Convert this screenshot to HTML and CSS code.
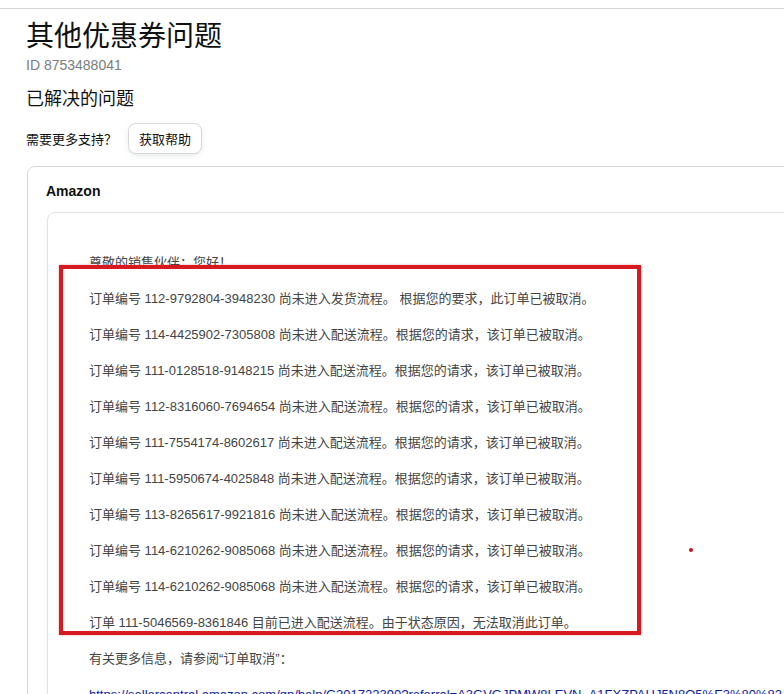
FILE: index.html
```html
<!DOCTYPE html>
<html lang="zh-CN">

<head>
  <meta charset="UTF-8">
  <meta name="viewport" content="width=device-width, initial-scale=1.0">
  <title>其他优惠券问题</title>
  <link rel="stylesheet" href="styles.css">
</head>

<body>

  <div class="topbar"></div>

  <div class="page">
    <h1>其他优惠券问题</h1>
    <div class="case-id">ID 8753488041</div>
    <h2>已解决的问题</h2>

    <div class="support">
      <span>需要更多支持？</span>
      <button class="help-btn">获取帮助</button>
    </div>

    <div class="card">
      <div class="card-title">Amazon</div>

      <div class="message">
        <p>尊敬的销售伙伴：您好！</p>
        <p>订单编号 112-9792804-3948230 尚未进入发货流程。 根据您的要求，此订单已被取消。</p>
        <p>订单编号 114-4425902-7305808 尚未进入配送流程。根据您的请求，该订单已被取消。</p>
        <p>订单编号 111-0128518-9148215 尚未进入配送流程。根据您的请求，该订单已被取消。</p>
        <p>订单编号 112-8316060-7694654 尚未进入配送流程。根据您的请求，该订单已被取消。</p>
        <p>订单编号 111-7554174-8602617 尚未进入配送流程。根据您的请求，该订单已被取消。</p>
        <p>订单编号 111-5950674-4025848 尚未进入配送流程。根据您的请求，该订单已被取消。</p>
        <p>订单编号 113-8265617-9921816 尚未进入配送流程。根据您的请求，该订单已被取消。</p>
        <p>订单编号 114-6210262-9085068 尚未进入配送流程。根据您的请求，该订单已被取消。</p>
        <p>订单编号 114-6210262-9085068 尚未进入配送流程。根据您的请求，该订单已被取消。</p>
        <p>订单 111-5046569-8361846 目前已进入配送流程。由于状态原因，无法取消此订单。</p>
        <p>有关更多信息，请参阅“订单取消”：</p>
        <p><a href="#">https://sellercentral.amazon.com/gp/help/G201722390?referral=A3GVGJPMW8LEVN_A1FXZPAHJ5N8Q5%E3%80%82</a></p>

        <!-- 截图上的红色标注 -->
        <div class="mark-box"></div>
        <div class="mark-dot"></div>
      </div>
    </div>
  </div>

</body>

</html>
```

FILE: styles.css
```css
html,
body {
  margin: 0;
  padding: 0;
  background-color: #fff;
  overflow: hidden;
}

body {
  font-family: "Liberation Sans", "Noto Sans CJK SC", sans-serif;
  color: #111;
}

.topbar {
  height: 8px;
  border-bottom: 1px solid #d6d6d6;
}

.page {
  width: 1100px;
  padding-left: 26px;
}

h1 {
  margin: 10px 0 0;
  font-size: 28px;
  line-height: 36px;
  font-weight: normal;
  color: #0f1111;
}

.case-id {
  margin-top: 1px;
  font-size: 14px;
  line-height: 18px;
  color: #7a7d7d;
}

h2 {
  margin: 13px 0 0;
  font-size: 18px;
  line-height: 24px;
  font-weight: normal;
  color: #0f1111;
}

.support {
  display: flex;
  align-items: center;
  gap: 6px;
  margin-top: 12px;
  font-size: 13px;
  color: #0f1111;
}

.support span {
  width: 96px;
}

.help-btn {
  height: 31px;
  padding: 0 10px;
  font-family: inherit;
  font-size: 13px;
  color: #0f1111;
  background-color: #fff;
  border: 1px solid #d5d9d9;
  border-radius: 8px;
  box-shadow: 0 2px 5px rgba(213, 217, 217, 0.5);
}

.card {
  margin-top: 12px;
  margin-left: 1px;
  padding: 14px 19px 0;
  border: 1px solid #d9d9d9;
  border-radius: 8px;
}

.card-title {
  margin-left: -1px;
  font-size: 14px;
  line-height: 20px;
  font-weight: bold;
  color: #0f1111;
}

.message {
  position: relative;
  margin-top: 11px;
  padding: 40px 0 0 41px;
  border: 1px solid #e3e3e3;
  border-radius: 8px;
  box-shadow: 0 0 3px rgba(0, 0, 0, 0.06);
  font-size: 13px;
  color: #444;
}

.message p {
  margin: 0 0 16px;
  line-height: 20px;
  white-space: nowrap;
}

.message a {
  color: #0b1b9e;
  text-decoration: underline;
}

.mark-box {
  position: absolute;
  left: 11px;
  top: 52px;
  width: 574px;
  height: 362px;
  border: 4px solid #d71a1f;
  box-shadow: 0 0 2px rgba(215, 26, 31, 0.4);
}

.mark-dot {
  position: absolute;
  left: 641px;
  top: 335px;
  width: 4px;
  height: 4px;
  border-radius: 50%;
  background-color: #c4161c;
}
```
